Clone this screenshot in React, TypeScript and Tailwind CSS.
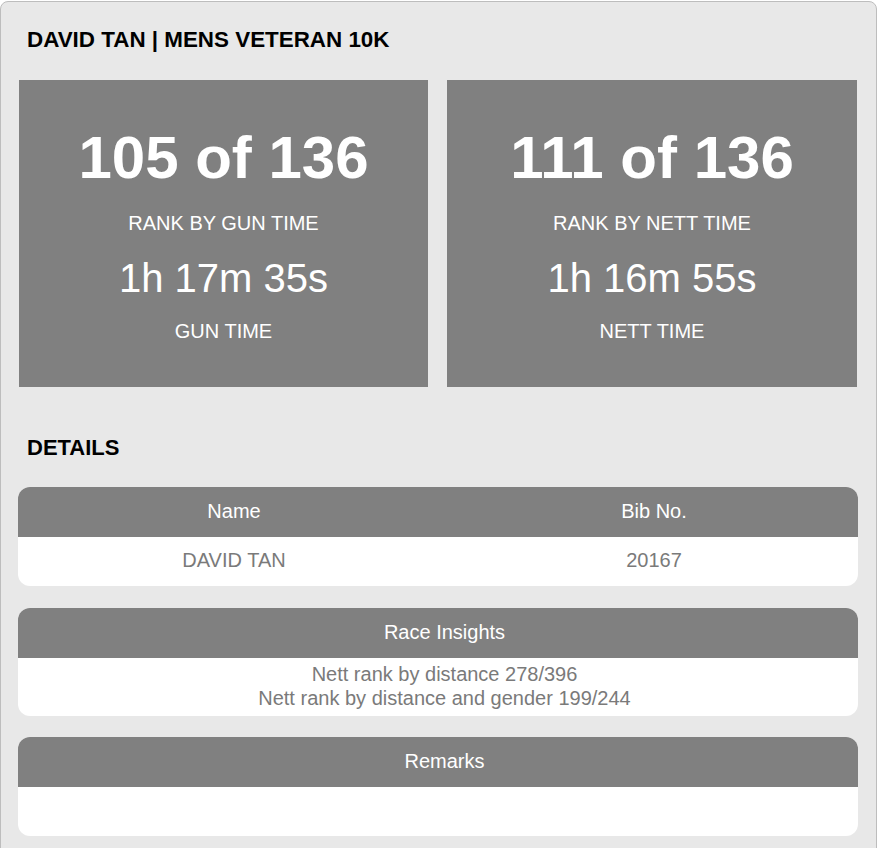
import React from "react";

function StatCard({ rank, rankLabel, time, timeLabel, w }: { rank: string; rankLabel: string; time: string; timeLabel: string; w: string }) {
  return (
    <div className={`${w} bg-[#808080] text-white text-center h-[307px] pt-[43px]`}>
      <div className="text-[60px] font-bold leading-[70px]">{rank}</div>
      <div className="text-[20px] leading-[24px] mt-[18px]">{rankLabel}</div>
      <div className="text-[40px] leading-[48px] mt-[19px]">{time}</div>
      <div className="text-[20px] leading-[24px] mt-[17px]">{timeLabel}</div>
    </div>
  );
}

export default function App() {
  return (
    <div className="bg-white pt-[1px] font-['Liberation_Sans',Arial,sans-serif]">
      <div className="w-[877px] border border-[#bdbdbd] rounded-t-[8px] bg-[#e8e8e8] pb-[12px]">
        <div className="pt-[24px] pl-[26px] text-[22.4px] leading-[28px] font-bold text-black">
          DAVID TAN | MENS VETERAN 10K
        </div>
        <div className="flex gap-[19px] pl-[18px] pr-[19px] mt-[26px]">
          <StatCard w="w-[409px]" rank="105 of 136" rankLabel="RANK BY GUN TIME" time="1h 17m 35s" timeLabel="GUN TIME" />
          <StatCard w="w-[410px]" rank="111 of 136" rankLabel="RANK BY NETT TIME" time="1h 16m 55s" timeLabel="NETT TIME" />
        </div>
        <div className="mt-[47px] pl-[26px] text-[22px] leading-[28px] font-bold text-black">DETAILS</div>
        <div className="pl-[17px] pr-[18px] mt-[25px] flex flex-col gap-[22px]">
          <div className="rounded-[12px] overflow-hidden bg-white text-[20px]">
            <div className="grid grid-cols-[432px_1fr] h-[50px] bg-[#808080] text-white">
              <div className="flex items-center justify-center pb-[3px]">Name</div>
              <div className="flex items-center justify-center pb-[3px]">Bib No.</div>
            </div>
            <div className="grid grid-cols-[432px_1fr] h-[49px] text-[#7a7a7a]">
              <div className="flex items-center justify-center pb-[3px]">DAVID TAN</div>
              <div className="flex items-center justify-center pb-[3px]">20167</div>
            </div>
          </div>
          <div className="rounded-[12px] overflow-hidden bg-white text-[20px]">
            <div className="h-[50px] bg-[#808080] text-white flex items-center justify-center pl-[13px] pb-[3px]">Race Insights</div>
            <div className="h-[58px] text-[#7a7a7a] flex flex-col items-center justify-center leading-[24px] pl-[13px] pb-[2px]">
              <div>Nett rank by distance 278/396</div>
              <div>Nett rank by distance and gender 199/244</div>
            </div>
          </div>
          <div className="rounded-[12px] overflow-hidden bg-white text-[20px] -mt-[1px]">
            <div className="h-[50px] bg-[#808080] text-white flex items-center justify-center pl-[13px] pb-[3px]">Remarks</div>
            <div className="h-[49px]"></div>
          </div>
        </div>
      </div>
    </div>
  );
}
